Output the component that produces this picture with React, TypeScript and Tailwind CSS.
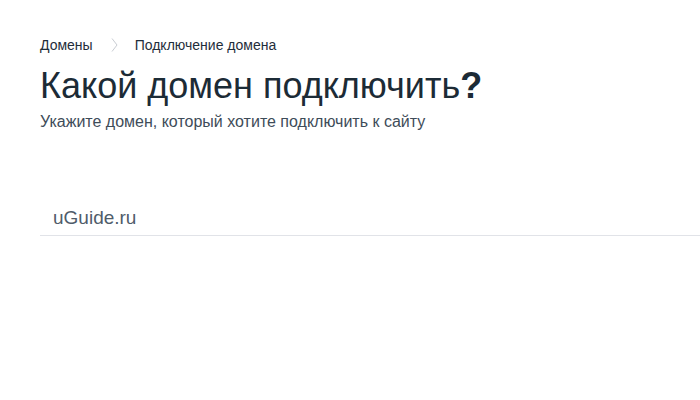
function Chevron() {
  return (
    <svg width="7" height="16" viewBox="0 0 7 16" fill="none" className="ml-[18px] mr-[17px]">
      <path d="M1 1.5 L6 8 L1 14.5" stroke="#c9cdd3" strokeWidth="1" />
    </svg>
  );
}

export default function App() {
  return (
    <div className="min-h-[400px] w-[700px] bg-white font-['Liberation_Sans',Arial,sans-serif] overflow-hidden">
      <div className="pl-[40px] pt-[36px]">
        {/* Breadcrumbs */}
        <nav className="flex items-center text-[14px] leading-[18px] text-[#1f2d3a]">
          <span>Домены</span>
          <Chevron />
          <span>Подключение домена</span>
        </nav>

        <h1 className="mt-[12px] text-[36px] leading-[40px] text-[#1c2b36]">
          Какой домен подключить<span className="font-bold">?</span>
        </h1>
        <p className="mt-[6px] text-[16px] leading-[20px] text-[#3e4c59]">
          Укажите домен, который хотите подключить к сайту
        </p>

        <div className="mt-[74px] border-b border-[#e1e3e8] pl-[13px] pb-[4px]">
          <span className="text-[19px] leading-[24px] text-[#4f5c6a]">uGuide.ru</span>
        </div>
      </div>
    </div>
  );
}
